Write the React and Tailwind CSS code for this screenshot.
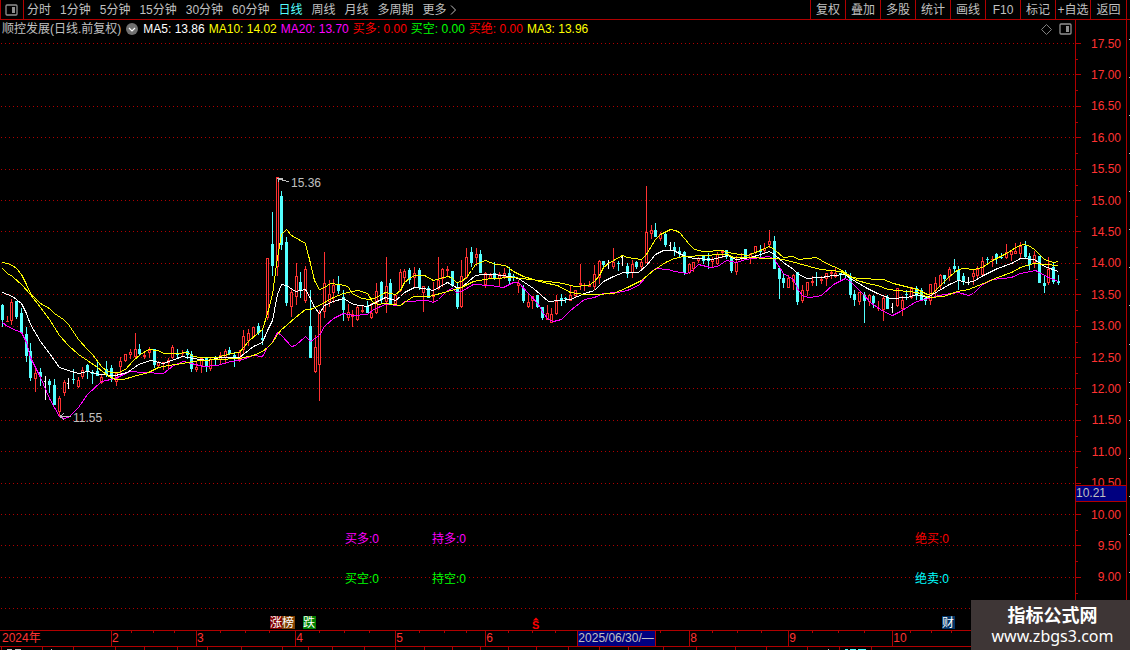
import { useState } from "react";

const PERIODS = ["分时", "1分钟", "5分钟", "15分钟", "30分钟", "60分钟", "日线", "周线", "月线", "多周期", "更多"];
const TOOLS = ["复权", "叠加", "多股", "统计", "画线", "F10", "标记", "+自选", "返回"];

const INDICATORS = [
  { text: "MA5: 13.86", color: "text-white" },
  { text: "MA10: 14.02", color: "text-[#ffff00]" },
  { text: "MA20: 13.70", color: "text-[#ff00ff]" },
  { text: "买多: 0.00", color: "text-[#ff0000]" },
  { text: "买空: 0.00", color: "text-[#00ff00]" },
  { text: "买绝: 0.00", color: "text-[#ff0000]" },
  { text: "MA3: 13.96", color: "text-[#ffff00]" },
];

const PRICES = Array.from({ length: 18 }, (_, i) => 17.5 - i * 0.5);

// Each cell runs from its start to the next one
const MONTHS = [
  { label: "2024年", span: 110 },
  { label: "2", span: 85 },
  { label: "3", span: 99 },
  { label: "4", span: 100 },
  { label: "5", span: 90 },
  { label: "6", span: 92 },
  { label: "2025/06/30/—", span: 112, current: true },
  { label: "8", span: 99 },
  { label: "9", span: 104 },
  { label: "10", span: 235 },
];

const WEEK_TICKS = [131, 153, 174, 220, 245, 269, 319, 344, 369, 419, 444, 466, 508, 532, 555, 661, 713, 738, 762, 813, 839, 865, 911, 932, 952];
const LOWER_TICKS = [1, 42, 73, 115, 144, 177, 207, 241, 282, 308, 332, 364, 395, 424, 452, 480, 508, 536, 568, 599, 628, 663, 696, 735, 766, 807, 839, 871];

// kind high top bottom low  (r = up, c = down, w = unchanged)
const CANDLES = `
c 304 305 320 327,r 316 321 322 322,r 299 302 321 325,c 301 301 317 319,c 308 313 333 333,c 327 334 356 362,
c 343 351 378 381,r 368 373 379 392,c 368 372 377 386,w 376 381 381 400,c 379 381 385 393,c 379 385 405 405,
r 396 398 412 417,r 380 382 393 396,w 378 383 383 389,c 369 379 380 384,r 377 380 387 388,r 367 370 377 379,
c 364 365 371 379,c 370 372 374 384,c 362 371 376 376,r 374 377 383 384,c 361 369 375 377,c 365 368 378 382,
r 373 373 382 386,r 357 361 367 376,r 354 354 361 362,r 349 352 355 359,r 333 349 357 358,c 344 349 354 355,
r 352 355 357 359,r 347 350 353 358,c 349 349 365 368,r 361 362 366 368,r 362 362 363 370,r 358 360 363 369,
r 345 347 358 359,c 349 353 355 358,r 350 353 354 356,c 349 351 355 359,c 351 354 369 372,r 361 367 370 372,
r 358 358 366 373,c 357 358 367 372,r 357 359 369 371,c 356 357 358 366,r 352 355 360 364,r 349 351 358 363,
c 347 350 354 355,c 352 355 357 367,r 350 352 360 362,r 330 336 350 355,r 329 333 341 346,r 327 327 337 337,
c 323 326 333 335,c 330 338 340 345,r 258 258 318 320,c 212 244 266 276,r 177 177 267 276,c 191 196 245 250,
c 237 242 303 306,r 288 292 307 317,r 263 276 297 305,c 272 282 291 298,r 266 269 301 303,c 290 326 358 358,
r 335 347 372 373,r 310 313 365 401,r 252 283 312 318,r 280 294 302 307,r 279 285 293 303,c 276 285 291 294,
c 290 297 310 321,r 304 312 318 321,r 310 314 317 327,r 305 307 320 321,r 306 310 312 313,c 301 306 313 313,
r 303 313 318 319,r 283 291 313 314,c 281 282 300 303,r 257 286 302 313,c 279 283 304 304,r 294 295 304 305,
r 269 272 291 292,r 269 271 278 283,c 268 270 280 284,r 267 273 278 288,c 268 270 288 290,r 286 286 293 312,
c 286 288 298 298,r 282 294 297 302,r 257 280 289 290,r 268 269 279 287,r 266 269 271 276,c 271 271 286 287,
c 282 287 307 309,r 260 276 307 308,r 248 257 278 279,c 247 252 263 267,r 248 254 258 266,c 250 254 273 273,
r 272 273 285 288,r 273 275 279 279,c 262 273 278 280,r 272 274 279 286,r 268 273 277 279,c 267 273 281 285,
c 274 276 277 281,r 280 283 286 293,c 285 288 301 303,r 294 302 307 308,r 296 296 301 309,c 295 295 307 308,
c 307 307 318 320,r 305 313 320 320,r 308 314 323 323,r 295 301 314 315,c 294 298 300 306,c 297 298 299 303,
r 286 295 301 301,r 290 290 296 297,r 264 283 285 290,r 283 285 286 291,r 281 285 287 287,r 265 274 287 290,
r 260 261 278 284,c 261 261 265 269,w 260 263 263 269,r 248 262 267 269,c 261 263 264 271,w 256 257 258 266,
c 263 266 274 278,r 260 264 273 278,c 261 262 267 269,r 260 262 267 269,r 186 232 263 263,r 225 230 234 239,
c 223 230 237 237,r 232 234 239 241,c 231 234 245 247,w 242 245 245 251,c 242 247 251 256,c 247 251 254 257,
c 251 252 273 275,r 263 264 273 274,r 262 262 269 272,r 257 258 261 263,c 255 256 261 264,c 253 258 261 269,
r 257 259 262 267,r 252 254 264 265,r 250 251 253 258,c 250 250 257 259,c 256 257 271 273,r 256 262 272 275,
r 253 257 258 260,c 249 249 258 258,r 253 254 258 264,r 246 246 253 254,c 245 250 252 259,r 243 248 251 253,
r 230 241 245 248,c 236 241 269 269,c 266 268 279 299,c 274 278 283 288,r 275 278 288 288,r 274 275 282 290,
c 272 272 302 305,r 285 290 301 303,r 282 282 291 296,r 276 281 283 286,c 272 277 278 286,r 276 279 281 284,
r 273 273 279 286,r 270 272 274 279,r 267 273 277 278,c 273 273 274 281,c 270 272 273 279,c 273 276 295 298,
c 290 294 300 306,r 292 292 302 305,c 292 295 301 323,r 294 295 302 306,c 295 296 303 308,r 301 308 309 311,
r 296 298 310 321,c 295 297 309 309,w 303 307 307 313,r 288 288 306 307,r 296 300 309 316,c 290 294 295 300,
r 287 287 298 299,c 286 288 296 300,c 288 290 300 301,c 297 298 301 305,r 284 284 301 305,r 277 283 291 297,
r 274 275 286 290,c 275 275 279 284,r 267 269 277 281,c 259 266 269 272,c 266 270 280 290,c 273 276 282 285,
w 277 282 282 285,r 269 273 277 285,r 266 269 276 279,r 257 261 275 275,c 257 259 260 264,r 256 259 260 267,
c 253 254 259 264,c 253 257 258 259,r 244 252 258 259,r 251 251 255 261,r 243 251 254 254,r 242 246 254 259,
c 241 246 257 258,c 253 256 265 270,r 251 255 263 268,c 256 256 283 283,c 275 283 286 293,r 257 269 283 285,
c 263 267 282 284,c 275 281 283 285`
  .split(",")
  .map((row, i) => {
    const [kind, ...ys] = row.trim().split(" ");
    const [high, top, bottom, low] = ys.map(Number);
    return { kind, high, top, bottom, low, x: Math.round(2 + i * 4.735) };
  });

const LINES = [
  {
    color: "#ff00ff",
    points:
      "2,322 7,326 16,330 21,332 26,342 30,357 40,377 49,398 59,416 63,418 68,417 78,407 87,394 101,381 115,378 129,371 143,372 163,373 173,365 183,361 203,366 217,365 230,361 239,360 253,355 262,356 267,347 272,342 277,332 281,335 291,346 295,345 305,336 310,341 319,335 324,326 333,318 343,313 353,315 367,314 373,309 385,304 400,305 404,301 427,300 433,302 438,299 447,290 452,288 456,292 461,291 473,284 490,285 503,287 513,282 518,282 528,293 538,304 543,313 548,319 553,321 561,319 570,310 584,299 594,297 603,293 617,292 627,290 638,285 646,276 655,268 668,269 674,271 687,273 693,269 698,264 710,267 717,266 726,260 736,262 745,259 760,257 769,256 774,259 783,273 793,279 798,290 803,296 810,297 821,295 833,284 845,278 850,281 863,294 870,302 883,311 892,315 900,311 916,301 925,299 938,295 958,292 968,295 973,293 982,284 992,279 1011,277 1020,273 1035,270 1048,277 1058,281",
  },
  {
    color: "#ffffff",
    points:
      "2,292 12,296 21,303 26,313 30,324 40,341 49,353 59,367 68,370 78,373 87,371 100,374 115,375 127,372 138,364 150,360 163,363 182,356 193,358 207,360 220,357 239,357 253,346 262,342 267,330 272,320 277,294 281,284 286,285 295,291 305,289 310,298 314,307 319,313 324,305 333,301 343,298 353,304 367,306 385,297 395,300 400,296 404,292 414,287 423,288 433,290 447,282 456,287 461,287 475,275 483,274 493,274 509,276 518,278 533,288 548,301 570,299 584,293 594,290 603,281 613,276 623,272 638,272 646,265 655,254 663,250 673,250 683,255 693,258 712,259 727,255 736,259 750,257 760,254 769,251 774,254 783,262 793,269 798,274 807,278 816,277 821,277 833,275 845,274 850,278 860,284 867,288 877,293 890,298 907,297 916,294 927,297 937,291 949,284 958,280 967,282 973,281 983,275 997,268 1011,263 1020,258 1034,259 1044,266 1058,271",
  },
  {
    color: "#ffff00",
    points:
      "2,262 7,263 12,265 16,268 21,274 26,284 30,293 35,298 40,303 49,308 54,313 63,319 68,324 78,339 87,349 92,354 101,366 107,371 112,372 118,372 125,369 133,360 140,354 148,349 157,350 164,353 177,353 187,352 193,356 200,357 217,357 230,353 239,352 248,341 258,332 262,329 267,313 272,294 277,257 281,234 286,229 291,235 300,240 305,243 310,263 314,280 319,289 324,287 330,283 338,284 345,285 348,287 352,293 357,296 362,298 369,299 376,297 385,292 395,294 400,290 404,282 409,278 414,275 424,275 433,280 447,276 451,277 456,282 461,281 466,277 471,270 475,264 485,260 495,264 505,265 513,271 523,276 533,279 543,282 557,285 570,292 584,294 594,294 613,293 627,287 641,280 653,270 665,262 674,258 683,256 707,255 717,254 727,254 733,257 743,257 773,258 783,259 798,263 820,269 840,271 850,276 857,278 883,279 893,283 917,289 927,294 932,293 940,285 949,276 958,269 963,268 973,269 982,267 992,260 1006,253 1017,246 1023,244 1028,245 1034,249 1044,259 1053,262 1058,261",
  },
  {
    color: "#ffff00",
    points:
      "2,268 7,273 12,276 22,285 30,294 40,307 49,319 59,335 68,345 78,354 87,360 97,367 107,375 115,379 123,379 133,376 148,372 158,367 168,365 182,363 200,360 217,359 239,358 253,355 262,351 267,347 272,342 277,334 281,329 286,325 295,317 305,309 310,309 319,305 333,297 343,293 352,291 358,290 367,293 372,301 377,304 385,303 400,305 404,302 413,296 429,296 447,291 461,287 473,281 490,278 513,277 530,279 547,281 563,283 574,286 588,285 594,281 599,275 603,267 608,263 622,255 627,257 641,259 646,254 655,239 660,234 670,229 675,230 679,232 689,244 694,249 703,251 722,250 727,252 733,253 747,255 760,250 769,246 774,249 783,257 793,256 798,259 816,257 826,263 840,269 850,276 857,280 867,283 877,285 888,289 917,292 928,297 943,296 957,291 968,289 983,283 997,277 1011,272 1020,267 1033,263 1058,265",
  },
];

const SIGNALS = [
  { text: "买多:0", x: 345, y: 543, color: "#ff00ff" },
  { text: "持多:0", x: 432, y: 543, color: "#ff00ff" },
  { text: "绝买:0", x: 915, y: 543, color: "#ff0000" },
  { text: "买空:0", x: 345, y: 583, color: "#00ff00" },
  { text: "持空:0", x: 432, y: 583, color: "#00ff00" },
  { text: "绝卖:0", x: 915, y: 583, color: "#00ffff" },
];

const BADGES = [
  { text: "涨", x: 270, color: "#800000" },
  { text: "榜", x: 282, color: "#804000" },
  { text: "跌", x: 303, color: "#008000" },
  { text: "财", x: 942, color: "#003366" },
];

const CANDLE_COLORS = { r: "#ff3232", c: "#54ffff", w: "#ffffff" };

function priceY(price) {
  return Math.round(43 + (17.5 - price) * 62.8);
}

function PanelIcon() {
  return (
    <svg width="13" height="12" viewBox="0 0 13 12" fill="none">
      <rect x="1" y="1" width="11" height="10" rx="1" stroke="#909090" strokeWidth="1.3" />
      <rect x="7" y="3" width="3" height="6" fill="#909090" />
    </svg>
  );
}

function Candle({ kind, x, high, top, bottom, low }) {
  const color = CANDLE_COLORS[kind];
  if (kind === "w") {
    return (
      <g fill={color}>
        <rect x={x} y={high} width="1" height={low - high} />
        <rect x={x - 1} y={top} width="2" height="1" />
      </g>
    );
  }
  const height = Math.max(bottom - top, 1);
  return (
    <g fill={color}>
      <rect x={x} y={high} width="1" height={Math.max(low - high, 1)} />
      <rect x={x - 1} y={top} width="3" height={height} />
      {kind === "r" && height > 2 && <rect x={x} y={top + 1} width="1" height={height - 2} fill="#000" />}
    </g>
  );
}

function Chart() {
  return (
    <svg
      className="absolute inset-0 h-full w-full"
      viewBox="0 20 1075 610"
      preserveAspectRatio="none"
      fontSize="12"
      role="img"
      aria-label="顺控发展 日线"
    >
      <g shapeRendering="crispEdges">
        {[...PRICES, 8.5].map((p) => (
          <line key={p} x1="1" x2="1075" y1={priceY(p) + 0.5} y2={priceY(p) + 0.5} stroke="#b00000" strokeDasharray="1 3" />
        ))}
        {CANDLES.map((c) => (
          <Candle key={c.x} {...c} />
        ))}
        {LINES.map((l, i) => (
          <polyline key={i} points={l.points} fill="none" stroke={l.color} transform="translate(0.5 0.5)" />
        ))}
        {/* arrows to the highest and the lowest price */}
        <path d="M277.500 178.500L289 182M277.500 178.500h5M278.500 178v4" stroke="#c0c0c0" fill="none" />
        <path d="M60 416.500H71M60 416.500l4-3M60 416.500l4 3" stroke="#c0c0c0" fill="none" />
      </g>
      <text x="291" y="187" fill="#c0c0c0">15.36</text>
      <text x="73" y="422" fill="#c0c0c0">11.55</text>
      {SIGNALS.map((s) => (
        <text key={s.text} x={s.x} y={s.y} fill={s.color}>{s.text}</text>
      ))}
      {BADGES.map((b) => (
        <g key={b.text}>
          <rect x={b.x} y="616" width="13" height="13" fill={b.color} />
          <text x={b.x} y="627" fill="#fff">{b.text}</text>
        </g>
      ))}
      <path d="M533 620.500L536 617.500L539 620.500Z" fill="#ff0000" />
      <text x="532" y="629" fill="#ff0000" fontWeight="bold" fontSize="11">S</text>
    </svg>
  );
}

function PriceAxis() {
  return (
    <div className="relative flex w-[52px] shrink-0 flex-col border-x border-[#b00000] pt-2 pb-[37px] text-[#ff3232]">
      <svg className="absolute top-0 left-0 h-full w-1.5" viewBox="0 20 6 610" preserveAspectRatio="none" shapeRendering="crispEdges">
        {[...PRICES, 8.5].map((p) => (
          <g key={p} fill="#b00000">
            <rect x="0" y={priceY(p)} width="5" height="1" />
            <rect x="0" y={priceY(p) + 16} width="2" height="1" />
          </g>
        ))}
      </svg>
      {PRICES.map((p) => (
        <div key={p} className="flex flex-1 items-center justify-end pr-[5px] leading-4">{p.toFixed(2)}</div>
      ))}
      <div className="absolute inset-x-0 top-[465px] h-[17px] border-y border-[#b00000] bg-[#000080] leading-[15px] text-[#c0c0c0]">
        10.21
      </div>
    </div>
  );
}

function DateAxis() {
  return (
    <div className="relative flex h-[17px] shrink-0 border-y border-[#b00000] text-[#ff3232]">
      {MONTHS.map((m, i) => (
        <div
          key={m.label}
          className={`min-w-0 basis-0 overflow-hidden leading-[15px] whitespace-nowrap ${i > 0 ? "border-l border-[#b00000]" : "pl-[2px]"}`}
          style={{ flexGrow: m.span }}
        >
          {m.current ? (
            <span className="inline-block h-full w-[78px] border-r border-[#b00000] bg-[#000080] text-[#c0c0c0]">{m.label}</span>
          ) : (
            m.label
          )}
        </div>
      ))}
      <svg className="absolute inset-x-0 top-0 h-0.5 w-full" viewBox="0 0 1127 2" preserveAspectRatio="none" fill="#b00000" shapeRendering="crispEdges">
        {WEEK_TICKS.map((x) => (
          <rect key={x} x={x} y="0" width="1" height="2" />
        ))}
      </svg>
    </div>
  );
}

export default function App() {
  const [period, setPeriod] = useState("日线");

  return (
    <div className="relative flex h-screen w-full flex-col overflow-hidden bg-black font-['Liberation_Sans','Noto_Sans_CJK_SC',sans-serif] text-[12px] text-[#c0c0c0]">
      <header className="flex h-5 shrink-0 items-stretch border-b border-[#b00000]">
        <button type="button" aria-label="侧栏" className="flex w-6 shrink-0 items-center justify-center border-x border-[#b00000] pr-0.5">
          <PanelIcon />
        </button>
        <nav className="flex flex-1 items-center gap-[9px] pl-[3px] leading-[18px] whitespace-nowrap">
          {PERIODS.map((p) => (
            <button
              key={p}
              type="button"
              onClick={() => setPeriod(p)}
              className={`flex items-center ${p === period ? "text-[#54ffff]" : ""}`}
            >
              {p}
              {p === "更多" && (
                <svg width="10" height="10" viewBox="0 0 10 10" fill="none" stroke="#c0c0c0">
                  <path d="M4 0.500L8.500 5L4 9.500" />
                </svg>
              )}
            </button>
          ))}
        </nav>
        <div className="flex pr-[3px] leading-[18px] whitespace-nowrap">
          {TOOLS.map((t) => (
            <button key={t} type="button" className="w-[35px] border-l border-[#b00000] text-center last:w-[37px] last:border-r">
              {t}
            </button>
          ))}
        </div>
      </header>

      <main className="flex min-h-0 flex-1">
        <section className="relative min-w-0 flex-1">
          <Chart />
          <div className="relative flex h-[18px] items-center gap-[5px] pl-[2px] whitespace-nowrap">
            <h1>顺控发展(日线.前复权)</h1>
            <button type="button" aria-label="指标菜单">
              <svg width="12" height="12" viewBox="0 0 12 12" fill="none">
                <circle cx="6" cy="6" r="6" fill="#707070" />
                <path d="M3 5L6 8L9 5" stroke="#fff" strokeWidth="1.2" />
              </svg>
            </button>
            <div className="flex items-center gap-1">
              {INDICATORS.map((ind) => (
                <span key={ind.text} className={ind.color}>{ind.text}</span>
              ))}
            </div>
            <div className="ml-auto flex items-center gap-[7px] pr-[3px]">
              <svg width="11" height="11" viewBox="0 0 11 11" fill="none" stroke="#808080">
                <path d="M5.500 0.500L10.500 5.500L5.500 10.500L0.500 5.500Z" />
              </svg>
              <PanelIcon />
            </div>
          </div>
        </section>
        <PriceAxis />
        <div className="flex w-[3px] shrink-0 flex-col justify-around">
          {Array.from({ length: 16 }, (_, i) => (
            <span key={i} className="h-px w-px self-end bg-[#c0c0c0]" />
          ))}
        </div>
      </main>

      <div className="mr-[3px] shrink-0 border-r border-[#b00000]">
        <DateAxis />
        <svg className="block h-[3px] w-full" viewBox="0 0 1126 3" preserveAspectRatio="none" shapeRendering="crispEdges">
          {LOWER_TICKS.map((x) => (
            <rect key={x} x={x} y="0" width="1" height="3" fill="#b00000" />
          ))}
          <path d="M7 2.500h5M15 2.500h6M51 2.500h1M828 2.500h1" stroke="#c0c0c0" />
          <path d="M845 2.500h3M850 2.500h6M858 2.500h8" stroke="#54ffff" />
        </svg>
      </div>

      <footer className="absolute right-0 bottom-0 flex h-[50px] w-[159px] flex-col items-center bg-[#3e3636] pt-1 pl-1 font-['Noto_Sans','Noto_Sans_CJK_SC',sans-serif] text-white">
        <strong className="text-[18px] leading-[22px]">指标公式网</strong>
        <a href="#" className="text-[16px] leading-5">www.zbgs3.com</a>
      </footer>
    </div>
  );
}
